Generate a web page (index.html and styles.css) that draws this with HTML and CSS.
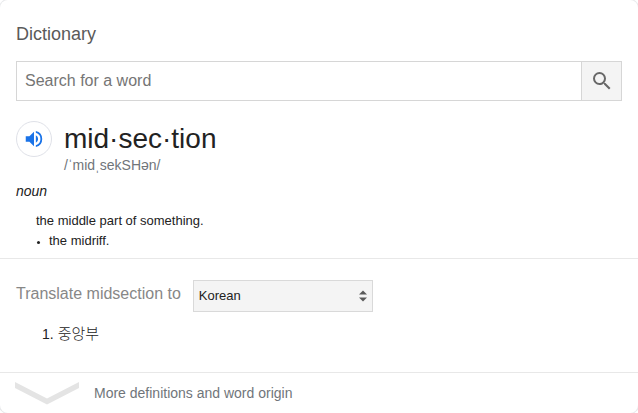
FILE: index.html
```html
<!DOCTYPE html>
<html lang="en">
<head>
<meta charset="utf-8">
<title>Dictionary</title>
<link rel="stylesheet" href="styles.css">
</head>
<body>
<main class="card">
  <section class="entry">
    <h1 class="heading">Dictionary</h1>
    <div class="search">
      <input class="search-input" type="text" placeholder="Search for a word">
      <button class="search-button" type="button">
        <svg width="24" height="24" viewBox="0 0 24 24" fill="#686868"><path d="M15.5 14h-.79l-.28-.27A6.47 6.47 0 0 0 16 9.500 6.500 6.500 0 1 0 9.500 16c1.610 0 3.090-.59 4.230-1.570l.27.28v.79l5 4.990L20.490 19l-4.990-5zm-6 0C7.010 14 5 11.990 5 9.500S7.010 5 9.500 5 14 7.010 14 9.500 11.990 14 9.500 14z"/></svg>
      </button>
    </div>
    <div class="word-row">
      <button class="speaker" type="button">
        <svg width="22" height="22" viewBox="0 0 24 24" fill="#1a73e8"><path d="M3 9v6h4l5 5V4L7 9H3zm13.500 3A4.500 4.500 0 0 0 14 7.970v8.050A4.470 4.470 0 0 0 16.500 12zM14 3.230v2.060a7 7 0 0 1 0 13.420v2.060a9 9 0 0 0 0-17.540z"/></svg>
      </button>
      <div>
        <h2 class="word">mid·sec·tion</h2>
        <p class="phonetic">/ˈmidˌsekSHən/</p>
      </div>
    </div>
    <p class="pos">noun</p>
    <div class="sense">
      <p>the middle part of something.</p>
      <p class="subsense"><span class="bullet"></span>the midriff.</p>
    </div>
  </section>
  <section class="translate">
    <div class="translate-row">
      <span class="translate-label">Translate midsection to</span>
      <button class="language" type="button">
        <span class="language-name">Korean</span>
        <svg width="8" height="12" viewBox="0 0 8 12" fill="#5a5a5a"><path d="M4 0.500L8 4.500H0zM0 7.500h8L4 11.500z"/></svg>
      </button>
    </div>
    <p class="result"><span>1.</span><span class="translation" lang="ko">중앙부</span></p>
  </section>
  <footer class="more">
    <svg width="64" height="23" viewBox="0 0 64 23" fill="#e4e4e4"><path d="M0 0L32 16.500 64 0V6L32 22.500 0 6z"/></svg>
    <span>More definitions and word origin</span>
  </footer>
</main>
</body>
</html>
```

FILE: styles.css
```css
* { box-sizing: border-box; }
body {
  margin: 0;
  background: #fff;
  color: #222;
  font-family: "Liberation Sans", "Noto Sans CJK KR", sans-serif;
}
h1, h2, p { margin: 0; font-weight: 400; }
button { padding: 0; font: inherit; color: inherit; }
svg { display: block; flex: none; }
.card {
  height: 413px;
  border-radius: 8px;
  box-shadow: 0 0 0 1px #e8e9eb;
  display: flex;
  flex-direction: column;
  overflow: hidden;
}
.entry { height: 259px; padding: 23px 16px 0; border-bottom: 1px solid #e8e8e8; }
.heading { font-size: 18px; line-height: 22px; color: #5a5a5a; }
.search { display: flex; height: 40px; margin-top: 16px; border: 1px solid #d6d6d6; }
.search-input {
  flex: 1;
  border: 0;
  padding: 0 8px;
  font: 16px "Liberation Sans", sans-serif;
  outline: 0;
}
.search-input::placeholder { color: #757575; }
.search-button {
  width: 40px;
  border: 0;
  border-left: 1px solid #d6d6d6;
  background: #f4f4f4;
  display: flex;
  align-items: center;
  justify-content: center;
}
.word-row { display: flex; gap: 12px; margin-top: 20px; }
.speaker {
  width: 36px;
  height: 36px;
  border: 1px solid #dfe1e8;
  border-radius: 50%;
  background: #fff;
  display: flex;
  align-items: center;
  justify-content: center;
}
.word { font-size: 28px; line-height: 36px; }
.phonetic { font-size: 14px; line-height: 16px; color: #70757a; }
.pos { margin-top: 10px; font-size: 14px; line-height: 16px; font-style: italic; }
.sense { padding: 12px 0 0 20px; font-size: 13px; line-height: 20px; }
.subsense { display: flex; align-items: center; }
.bullet { width: 3px; height: 3px; margin: 3px 9px 0 1px; border-radius: 50%; background: #222; }
.translate { height: 114px; padding: 21px 16px 0; border-bottom: 1px solid #e8e8e8; }
.translate-row { display: flex; align-items: center; gap: 12px; }
.translate-label { font-size: 16px; line-height: 20px; color: #878787; padding-bottom: 4px; }
.language {
  width: 180px;
  height: 32px;
  padding: 0 5px;
  border: 1px solid #d9d9d9;
  background: #f4f4f4;
  font-size: 13px;
  display: flex;
  align-items: center;
  justify-content: space-between;
}
.language-name { padding-bottom: 2px; }
.result { display: flex; gap: 4px; padding: 12px 0 0 26px; font-size: 14px; line-height: 20px; }
.translation { font-family: "Noto Sans CJK KR", sans-serif; font-size: 15px; font-weight: 300; line-height: 18px; }
.more { flex: 1; display: flex; align-items: center; gap: 15px; padding-left: 15px; font-size: 14px; color: #70757a; }
```
